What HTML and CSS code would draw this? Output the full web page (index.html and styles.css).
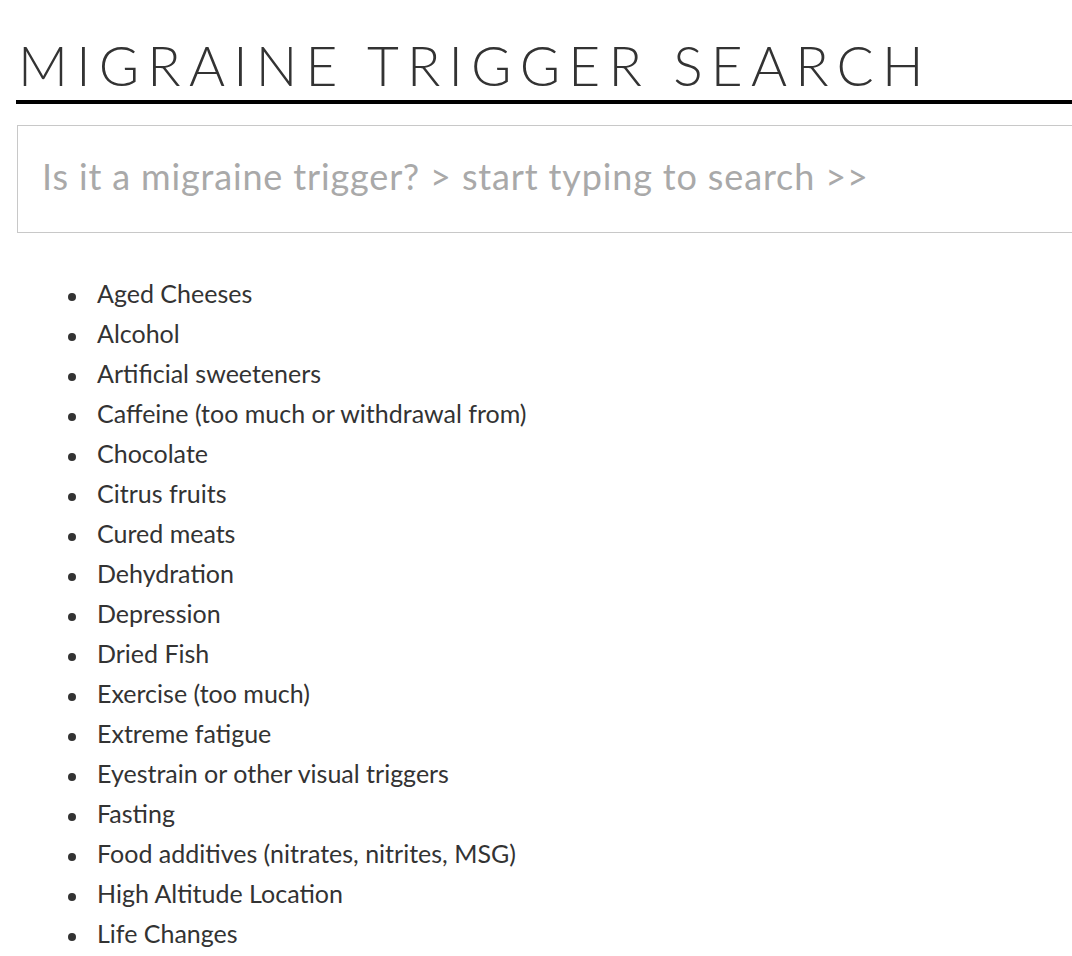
FILE: index.html
```html
<!DOCTYPE html>
<html lang="en">
<head>
<meta charset="utf-8">
<title>Migraine Trigger Search</title>
<link rel="stylesheet" href="styles.css">
</head>
<body>
<div class="page">
  <h1 class="title">MIGRAINE TRIGGER SEARCH</h1>
  <div class="search">
    <input class="search-input" type="text" placeholder="Is it a migraine trigger? &gt; start typing to search &gt;&gt;">
  </div>
  <ul class="triggers">
    <li>Aged Cheeses</li>
    <li>Alcohol</li>
    <li>Artificial sweeteners</li>
    <li>Caffeine (too much or withdrawal from)</li>
    <li>Chocolate</li>
    <li>Citrus fruits</li>
    <li>Cured meats</li>
    <li>Dehydration</li>
    <li>Depression</li>
    <li>Dried Fish</li>
    <li>Exercise (too much)</li>
    <li>Extreme fatigue</li>
    <li>Eyestrain or other visual triggers</li>
    <li>Fasting</li>
    <li>Food additives (nitrates, nitrites, MSG)</li>
    <li>High Altitude Location</li>
    <li>Life Changes</li>
  </ul>
</div>
</body>
</html>
```
FILE: styles.css
```css
html, body {
  margin: 0;
  padding: 0;
  background: #fff;
  overflow: hidden;
}
.page {
  padding: 34px 0 0 16px;
  width: 1100px;
  font-family: Lato, "Open Sans", sans-serif;
  color: #333;
}
.title {
  margin: 0;
  font-weight: 300;
  font-size: 55px;
  line-height: 62px;
  letter-spacing: 8.2px;
  padding-left: 2px;
  padding-bottom: 4px;
  border-bottom: 4px solid #000;
  color: #333;
}
.search {
  margin-top: 21px;
  margin-left: 1px;
}
.search-input {
  box-sizing: border-box;
  width: 1100px;
  height: 108px;
  border: 1px solid #c8c8c8;
  padding: 0 0 6px 24px;
  font-family: Lato, "Open Sans", sans-serif;
  font-weight: 400;
  font-size: 36px;
  letter-spacing: 0.85px;
  color: #333;
  outline: none;
  background: #fff;
}
.search-input::placeholder {
  color: #a9a9a9;
}
.triggers {
  list-style: none;
  margin: 40px 0 0 0;
  padding: 0 0 0 81px;
  font-size: 25px;
  line-height: 40px;
  color: #333;
}
.triggers li::before {
  content: "";
  display: inline-block;
  width: 8px;
  height: 8px;
  border-radius: 50%;
  background: #333;
  margin: 0 21px 2px -29px;
  vertical-align: baseline;
}
```
